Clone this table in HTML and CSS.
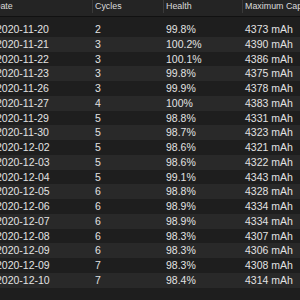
FILE: index.html
```html
<!DOCTYPE html>
<html>
<head>
<meta charset="utf-8">
<link rel="stylesheet" href="styles.css">
</head>
<body>
<div class="table">
  <div class="head">
    <div class="hcell first">Date</div>
    <div class="hcell sep">Cycles</div>
    <div class="hcell sep">Health</div>
    <div class="hcell sep">Maximum Capacity</div>
  </div>
  <div class="body">
    <div class="row"><span>2020-11-20</span><span>2</span><span>99.8%</span><span>4373 mAh</span></div>
    <div class="row"><span>2020-11-21</span><span>3</span><span>100.2%</span><span>4390 mAh</span></div>
    <div class="row"><span>2020-11-22</span><span>3</span><span>100.1%</span><span>4386 mAh</span></div>
    <div class="row"><span>2020-11-23</span><span>3</span><span>99.8%</span><span>4375 mAh</span></div>
    <div class="row"><span>2020-11-26</span><span>3</span><span>99.9%</span><span>4378 mAh</span></div>
    <div class="row"><span>2020-11-27</span><span>4</span><span>100%</span><span>4383 mAh</span></div>
    <div class="row"><span>2020-11-29</span><span>5</span><span>98.8%</span><span>4331 mAh</span></div>
    <div class="row"><span>2020-11-30</span><span>5</span><span>98.7%</span><span>4323 mAh</span></div>
    <div class="row"><span>2020-12-02</span><span>5</span><span>98.6%</span><span>4321 mAh</span></div>
    <div class="row"><span>2020-12-03</span><span>5</span><span>98.6%</span><span>4322 mAh</span></div>
    <div class="row"><span>2020-12-04</span><span>5</span><span>99.1%</span><span>4343 mAh</span></div>
    <div class="row"><span>2020-12-05</span><span>6</span><span>98.8%</span><span>4328 mAh</span></div>
    <div class="row"><span>2020-12-06</span><span>6</span><span>98.9%</span><span>4334 mAh</span></div>
    <div class="row"><span>2020-12-07</span><span>6</span><span>98.9%</span><span>4334 mAh</span></div>
    <div class="row"><span>2020-12-08</span><span>6</span><span>98.3%</span><span>4307 mAh</span></div>
    <div class="row"><span>2020-12-09</span><span>6</span><span>98.3%</span><span>4306 mAh</span></div>
    <div class="row"><span>2020-12-09</span><span>7</span><span>98.3%</span><span>4308 mAh</span></div>
    <div class="row"><span>2020-12-10</span><span>7</span><span>98.4%</span><span>4314 mAh</span></div>
  </div>
</div>
</body>
</html>
```
FILE: styles.css
```css
html, body {
  margin: 0;
  padding: 0;
  background: #1e1e1e;
  overflow: hidden;
}
body {
  width: 300px;
  height: 300px;
  font-family: "Liberation Sans", Arial, sans-serif;
  color: #e2e2e2;
}
.table {
  margin-left: -7px;
  width: 330px;
}
.head {
  display: grid;
  grid-template-columns: 99px 71px 79px 1fr;
  height: 17px;
  box-sizing: border-box;
  background: #242424;
  border-bottom: 1px solid #111111;
}
.hcell {
  font-size: 8.9px;
  line-height: 10px;
  padding: 1px 0 0 3px;
  color: #dadada;
  white-space: nowrap;
  overflow: hidden;
  position: relative;
}
.hcell.first {
  padding-left: 1px;
}
.hcell.sep::before {
  content: "";
  position: absolute;
  left: 0;
  top: 0;
  width: 1px;
  height: 13px;
  background: #3a3a3a;
}
.body {
  padding-top: 5px;
}
.row {
  display: grid;
  grid-template-columns: 99px 71px 79px 1fr;
  height: 14.75px;
  font-size: 10.5px;
  line-height: 14.75px;
  white-space: nowrap;
}
.row:nth-child(even) {
  background: #292929;
}
.row span {
  padding-left: 3px;
  overflow: hidden;
}
```
